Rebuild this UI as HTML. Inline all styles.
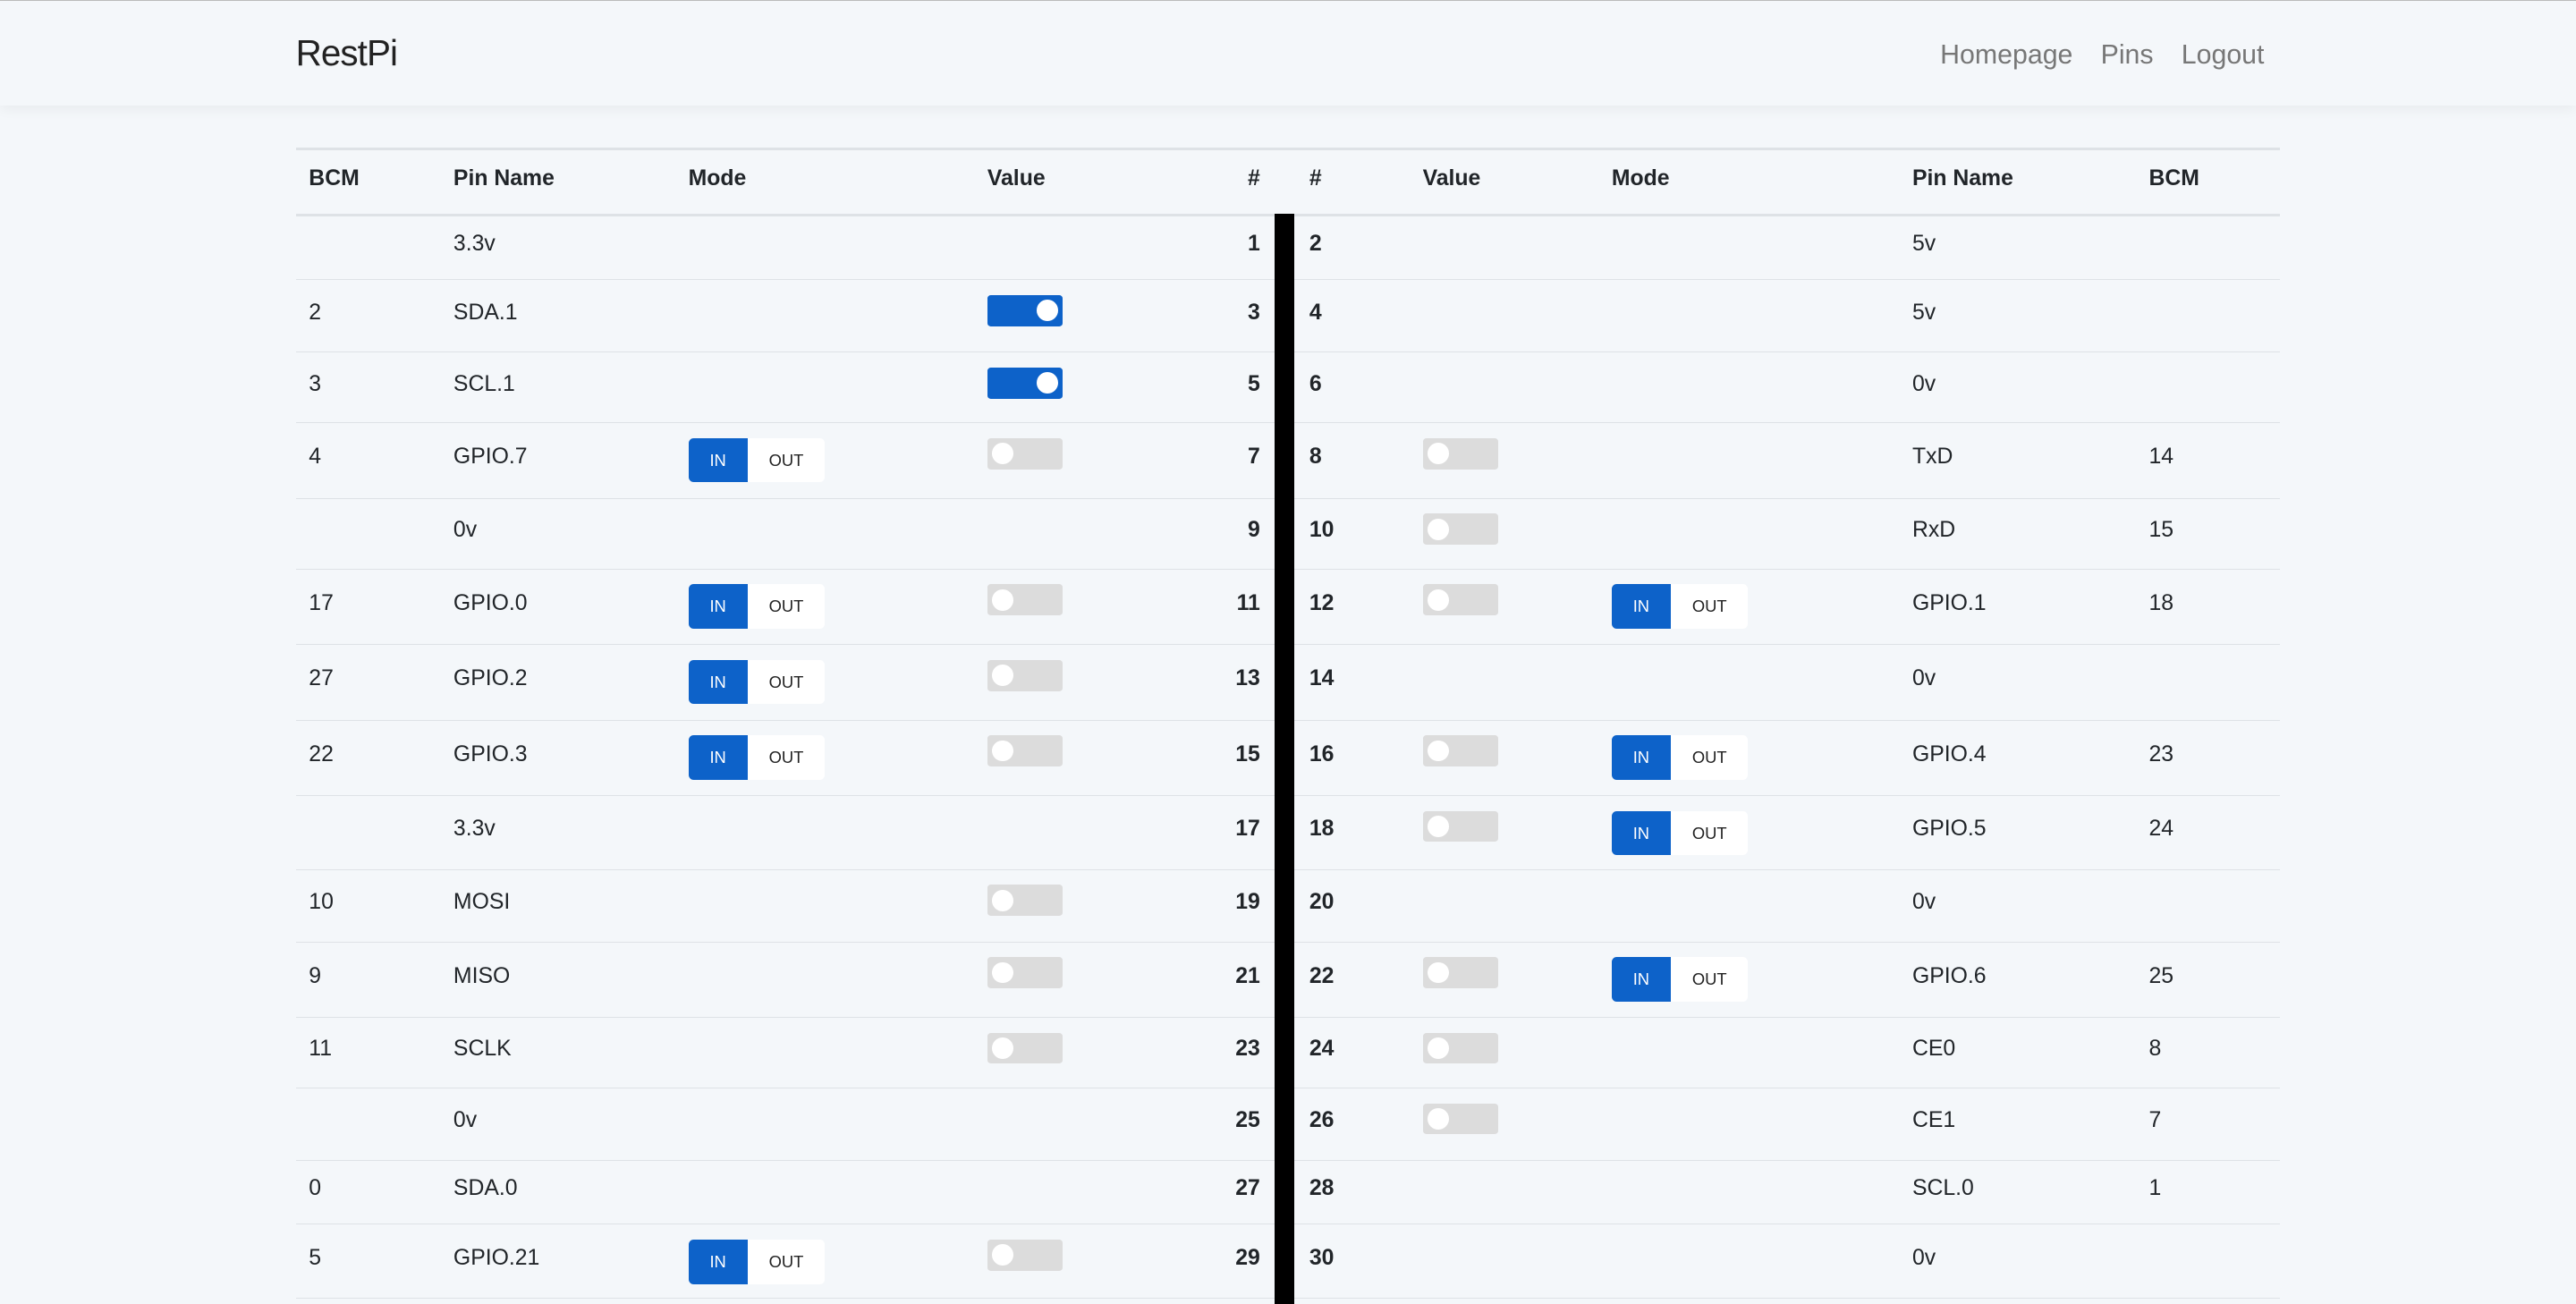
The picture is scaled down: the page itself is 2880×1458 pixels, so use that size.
<!DOCTYPE html>
<html><head><meta charset="utf-8"><style>
html{zoom:1.83673}
*{box-sizing:border-box;margin:0;padding:0}
body{width:1568px;height:794px;overflow:hidden;background:#f4f7fa;font-family:"Liberation Sans",sans-serif;color:#212529;position:relative}
.nav{position:absolute;left:0;top:0;width:1568px;height:64px;border-top:1px solid #bbb;background:#f4f7fa;box-shadow:0 2px 8px rgba(0,0,0,.06)}
.brand{position:absolute;left:180px;top:19px;font-size:22px;color:#222;letter-spacing:-0.5px}
.links{position:absolute;left:1181px;top:24px;font-size:16.5px;color:#777}
.links span{margin-right:17px}
.tbl{position:absolute;left:180px;top:90px;width:1208px;border-top:2px solid #dee2e6}
.hd{position:relative;height:40px;border-bottom:2px solid #dee2e6;font-weight:bold;font-size:13.5px}
.r{position:relative;border-bottom:1px solid #dee2e6;font-size:13.5px}
.c{position:absolute;top:50%;transform:translateY(-50%);margin-top:-2px}
.n{right:621px;text-align:right;font-weight:bold}
.a{left:8px}.p{left:96px}.m{left:239px}.v{left:421px}
.n2{left:617px;font-weight:bold}.v2{left:686px}.m2{left:801px}.p2{left:984px}.b2{left:1128px}
.t{position:absolute;top:9px;width:46px;height:19px;border-radius:2px;background:#dcdcdc}
.t::after{content:"";position:absolute;left:3px;top:3px;width:13px;height:13px;border-radius:50%;background:#fff}
.t.on{background:#0d62c9}.t.on::after{left:30px}
.io{position:absolute;top:9px;width:83px;height:27px;border-radius:3px;background:#fff;font-size:10px;overflow:hidden}
.io i{position:absolute;left:0;top:0;width:36px;height:27px;background:#0d62c9;color:#fff;font-style:normal;text-align:center;line-height:27px}
.io s{position:absolute;left:49px;top:0;line-height:27px;text-decoration:none;color:#222}
.bar{position:absolute;left:776px;top:130px;width:12px;height:664px;background:#000}
</style></head><body>
<div class="nav"><div class="brand">RestPi</div><div class="links"><span>Homepage</span><span>Pins</span><span>Logout</span></div></div>
<div class="tbl">
<div class="hd"><span class="c a">BCM</span><span class="c p">Pin Name</span><span class="c m">Mode</span><span class="c v">Value</span><span class="c n">#</span><span class="c n2">#</span><span class="c v2">Value</span><span class="c m2">Mode</span><span class="c p2">Pin Name</span><span class="c b2">BCM</span></div>
<div class="r" style="height:39px"><span class="c p">3.3v</span><span class="c n">1</span><span class="c n2">2</span><span class="c p2">5v</span></div>
<div class="r" style="height:44px"><span class="c a">2</span><span class="c p">SDA.1</span><div class="t on" style="left:421px"></div><span class="c n">3</span><span class="c n2">4</span><span class="c p2">5v</span></div>
<div class="r" style="height:43px"><span class="c a">3</span><span class="c p">SCL.1</span><div class="t on" style="left:421px"></div><span class="c n">5</span><span class="c n2">6</span><span class="c p2">0v</span></div>
<div class="r" style="height:46px"><span class="c a">4</span><span class="c p">GPIO.7</span><div class="io" style="left:239px"><i>IN</i><s>OUT</s></div><div class="t" style="left:421px"></div><span class="c n">7</span><span class="c n2">8</span><div class="t" style="left:686px"></div><span class="c p2">TxD</span><span class="c b2">14</span></div>
<div class="r" style="height:43px"><span class="c p">0v</span><span class="c n">9</span><span class="c n2">10</span><div class="t" style="left:686px"></div><span class="c p2">RxD</span><span class="c b2">15</span></div>
<div class="r" style="height:46px"><span class="c a">17</span><span class="c p">GPIO.0</span><div class="io" style="left:239px"><i>IN</i><s>OUT</s></div><div class="t" style="left:421px"></div><span class="c n">11</span><span class="c n2">12</span><div class="t" style="left:686px"></div><div class="io" style="left:801px"><i>IN</i><s>OUT</s></div><span class="c p2">GPIO.1</span><span class="c b2">18</span></div>
<div class="r" style="height:46px"><span class="c a">27</span><span class="c p">GPIO.2</span><div class="io" style="left:239px"><i>IN</i><s>OUT</s></div><div class="t" style="left:421px"></div><span class="c n">13</span><span class="c n2">14</span><span class="c p2">0v</span></div>
<div class="r" style="height:46px"><span class="c a">22</span><span class="c p">GPIO.3</span><div class="io" style="left:239px"><i>IN</i><s>OUT</s></div><div class="t" style="left:421px"></div><span class="c n">15</span><span class="c n2">16</span><div class="t" style="left:686px"></div><div class="io" style="left:801px"><i>IN</i><s>OUT</s></div><span class="c p2">GPIO.4</span><span class="c b2">23</span></div>
<div class="r" style="height:45px"><span class="c p">3.3v</span><span class="c n">17</span><span class="c n2">18</span><div class="t" style="left:686px"></div><div class="io" style="left:801px"><i>IN</i><s>OUT</s></div><span class="c p2">GPIO.5</span><span class="c b2">24</span></div>
<div class="r" style="height:44px"><span class="c a">10</span><span class="c p">MOSI</span><div class="t" style="left:421px"></div><span class="c n">19</span><span class="c n2">20</span><span class="c p2">0v</span></div>
<div class="r" style="height:46px"><span class="c a">9</span><span class="c p">MISO</span><div class="t" style="left:421px"></div><span class="c n">21</span><span class="c n2">22</span><div class="t" style="left:686px"></div><div class="io" style="left:801px"><i>IN</i><s>OUT</s></div><span class="c p2">GPIO.6</span><span class="c b2">25</span></div>
<div class="r" style="height:43px"><span class="c a">11</span><span class="c p">SCLK</span><div class="t" style="left:421px"></div><span class="c n">23</span><span class="c n2">24</span><div class="t" style="left:686px"></div><span class="c p2">CE0</span><span class="c b2">8</span></div>
<div class="r" style="height:44px"><span class="c p">0v</span><span class="c n">25</span><span class="c n2">26</span><div class="t" style="left:686px"></div><span class="c p2">CE1</span><span class="c b2">7</span></div>
<div class="r" style="height:39px"><span class="c a">0</span><span class="c p">SDA.0</span><span class="c n">27</span><span class="c n2">28</span><span class="c p2">SCL.0</span><span class="c b2">1</span></div>
<div class="r" style="height:45px"><span class="c a">5</span><span class="c p">GPIO.21</span><div class="io" style="left:239px"><i>IN</i><s>OUT</s></div><div class="t" style="left:421px"></div><span class="c n">29</span><span class="c n2">30</span><span class="c p2">0v</span></div>
</div>
<div class="bar"></div>
</body></html>
